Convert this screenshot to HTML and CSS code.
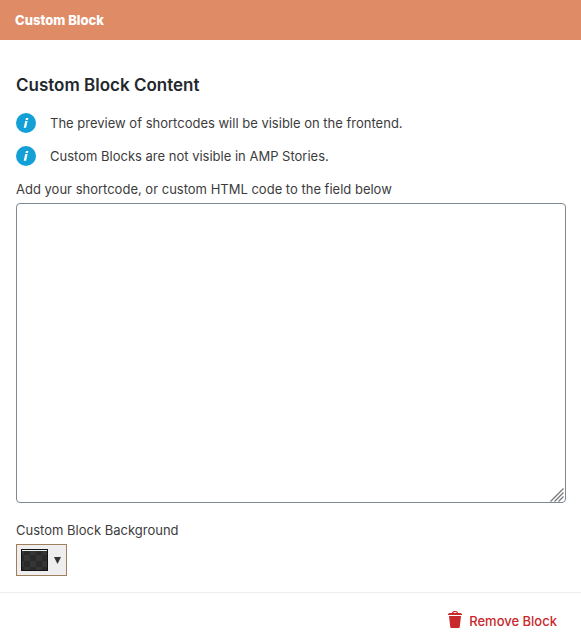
FILE: index.html
```html
<!DOCTYPE html>
<html lang="en">
<head>
<meta charset="utf-8">
<meta name="viewport" content="width=device-width, initial-scale=1">
<title>Custom Block</title>
<link rel="stylesheet" href="styles.css">
</head>
<body>
<header class="bar">Custom Block</header>
<main class="content">
  <h1 class="title">Custom Block Content</h1>
  <p class="note">
    <svg class="info" viewBox="0 0 20 20" aria-hidden="true"><circle cx="10" cy="10" r="10" fill="#12a0d7"/><path d="M10 5h2.400l-.5 2.100H9.500zM9.200 8h2.400l-1.500 6.800H7.700z" fill="#fff"/></svg>
    <span>The preview of shortcodes will be visible on the frontend.</span>
  </p>
  <p class="note">
    <svg class="info" viewBox="0 0 20 20" aria-hidden="true"><circle cx="10" cy="10" r="10" fill="#12a0d7"/><path d="M10 5h2.400l-.5 2.100H9.500zM9.200 8h2.400l-1.500 6.800H7.700z" fill="#fff"/></svg>
    <span>Custom Blocks are not visible in AMP Stories.</span>
  </p>
  <label class="label" for="code">Add your shortcode, or custom HTML code to the field below</label>
  <div class="editor">
    <textarea class="code" id="code" rows="15"></textarea>
    <svg class="grip" viewBox="0 0 14 14" aria-hidden="true"><path d="M.5 13.500l13-13M4.500 13.500l9-9M8.500 13.500l5-5" stroke="#777" stroke-width="1.300" fill="none"/></svg>
  </div>
  <label class="label" for="background">Custom Block Background</label>
  <button class="picker" id="background" type="button">
    <svg class="swatch" viewBox="0 0 27 22" aria-hidden="true"><path fill="#2a2a2a" d="M0 0h27v22H0z"/><path fill="#353535" d="M1 2h2v4H1zM9 2h6v4H9zM21 2h5v4h-5zM3 6h6v6H3zM15 6h6v6h-6zM1 12h2v6H1zM9 12h6v6H9zM21 12h5v6h-5zM3 18h6v3H3zM15 18h6v3h-6z"/><path d="M.5.5h26v21H.5z" fill="none" stroke="#111"/><path fill="#e8f0ee" d="M1 1h25v1H1z"/></svg>
    <svg class="arrow" viewBox="0 0 7 7" aria-hidden="true"><path d="M0 0h7L3.500 7z" fill="#333"/></svg>
  </button>
</main>
<footer class="footer">
  <button class="remove" type="button">
    <svg class="trash" viewBox="0 0 14 17" aria-hidden="true"><path d="M4.500 2.500c0-1.400 1-2 2.500-2s2.500.6 2.500 2" fill="none" stroke="#c9282d" stroke-width="1.200"/><path d="M1.500 2h11l1.500 1v1H0V3zM1 5h12l-1.200 10.500c-.1 1-.5 1.500-1.300 1.500h-7c-.8 0-1.200-.5-1.300-1.500z" fill="#c9282d"/></svg>
    Remove Block
  </button>
</footer>
</body>
</html>
```
FILE: styles.css
```css
* {
  box-sizing: border-box;
}

body {
  margin: 0;
  background: #fff;
  color: #3c3c3c;
  font: 400 13px/20px Inter, "Liberation Sans", sans-serif;
}

.bar {
  padding: 10px 15px;
  background: #df8b66;
  color: #fff;
  font-weight: 800;
}

.content {
  padding: 32px 15px 16px 16px;
}

.title {
  margin: 0 0 15px;
  color: #23282d;
  font-size: 17px;
  font-weight: 600;
  line-height: 26px;
}

.note {
  display: flex;
  align-items: center;
  gap: 14px;
  margin: 0 0 13px;
}

.info {
  width: 20px;
  height: 20px;
}

.label {
  display: block;
  margin-bottom: 4px;
}

.editor {
  position: relative;
  margin-bottom: 17px;
}

.code {
  display: block;
  width: 100%;
  height: 300px;
  padding: 8px;
  border: 1px solid #7e8993;
  border-radius: 4px;
  background: #fff;
  color: inherit;
  font: inherit;
  resize: none;
}

.grip {
  position: absolute;
  right: 2px;
  bottom: 1px;
  width: 14px;
  height: 14px;
  pointer-events: none;
}

.picker {
  display: flex;
  align-items: center;
  gap: 6px;
  height: 32px;
  padding: 0 5px 0 4px;
  border: 1px solid #a07e5c;
  background: #eee;
}

.swatch {
  width: 27px;
  height: 22px;
}

.arrow {
  width: 7px;
  height: 7px;
}

.footer {
  display: flex;
  justify-content: flex-end;
  padding: 18px 24px 12px;
  border-top: 1px solid #eee;
}

.remove {
  display: flex;
  gap: 7px;
  padding: 0;
  border: 0;
  background: none;
  color: #c9282d;
  font: inherit;
  font-weight: 500;
}

.trash {
  width: 14px;
  height: 17px;
}
```
